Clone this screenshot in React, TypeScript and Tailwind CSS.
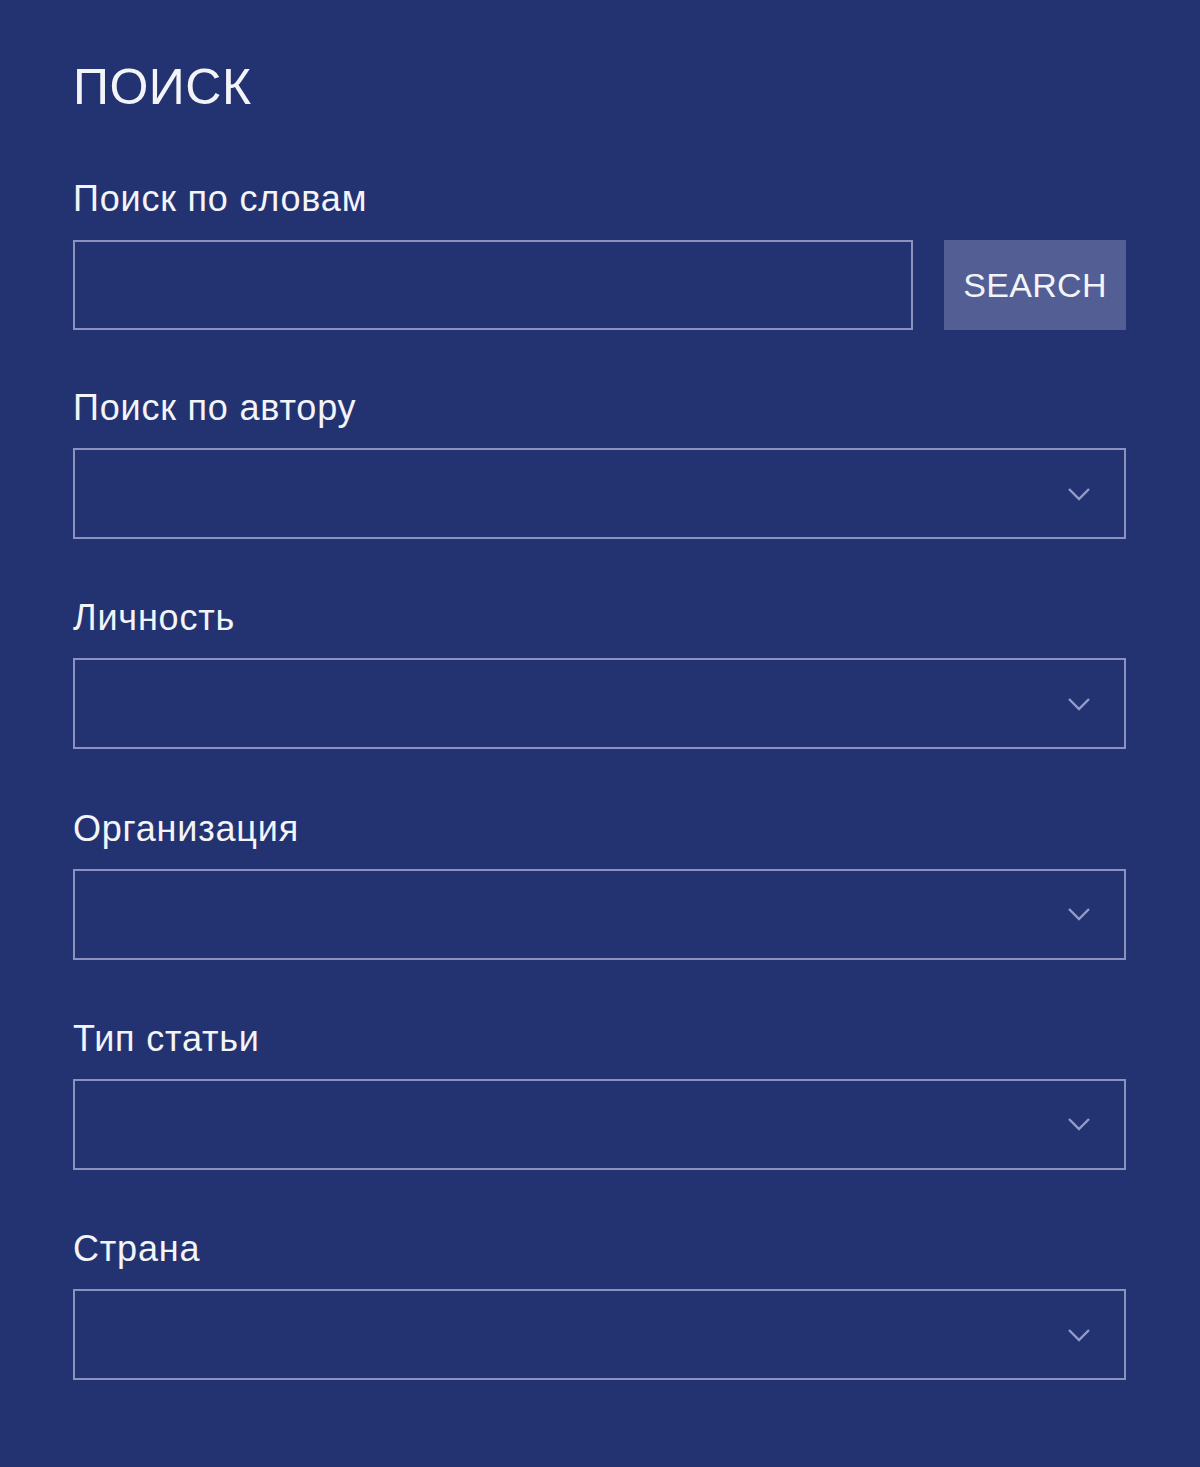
import React from 'react';

const selects = ['Поиск по автору', 'Личность', 'Организация', 'Тип статьи', 'Страна'];

function Chevron() {
    return (
        <svg width="24" height="14" viewBox="0 0 24 14" fill="none" className="text-[#939cc8]">
            <path d="M2 2l10 10L22 2" stroke="currentColor" strokeWidth="2.4" />
        </svg>
    );
}

export default function App() {
    return (
        <div className="min-h-[1467px] w-full bg-[#233372] pl-[73px] pr-[74px] pt-[57px] pb-[80px] font-['Liberation_Sans',Arial,sans-serif] text-[#f3f4f8]">
            <h1 className="text-[50px] leading-[60px] font-normal tracking-[0.5px]">ПОИСК</h1>

            <div className="mt-[62px]">
                <label className="block text-[36px] leading-[40px] tracking-[0.8px] mb-[21px]">Поиск по словам</label>
                <div className="flex gap-[31px]">
                    <input
                        type="text"
                        className="h-[90px] flex-1 border-2 border-[#8a93bf] bg-transparent outline-none px-4 text-[30px]"
                    />
                    <button className="h-[90px] w-[182px] bg-[#525e94] text-[34px] tracking-[0.3px] text-[#f3f4f8]">
                        SEARCH
                    </button>
                </div>
            </div>

            {selects.map((label, i) => (
                <div key={label} className={i === 0 ? 'mt-[58px]' : 'mt-[59.3px]'}>
                    <label className="block text-[36px] leading-[40px] tracking-[0.8px] mb-[20px]">{label}</label>
                    <div className="h-[91px] border-2 border-[#8a93bf] flex items-center justify-end pr-[33px]">
                        <Chevron />
                    </div>
                </div>
            ))}
        </div>
    );
}
